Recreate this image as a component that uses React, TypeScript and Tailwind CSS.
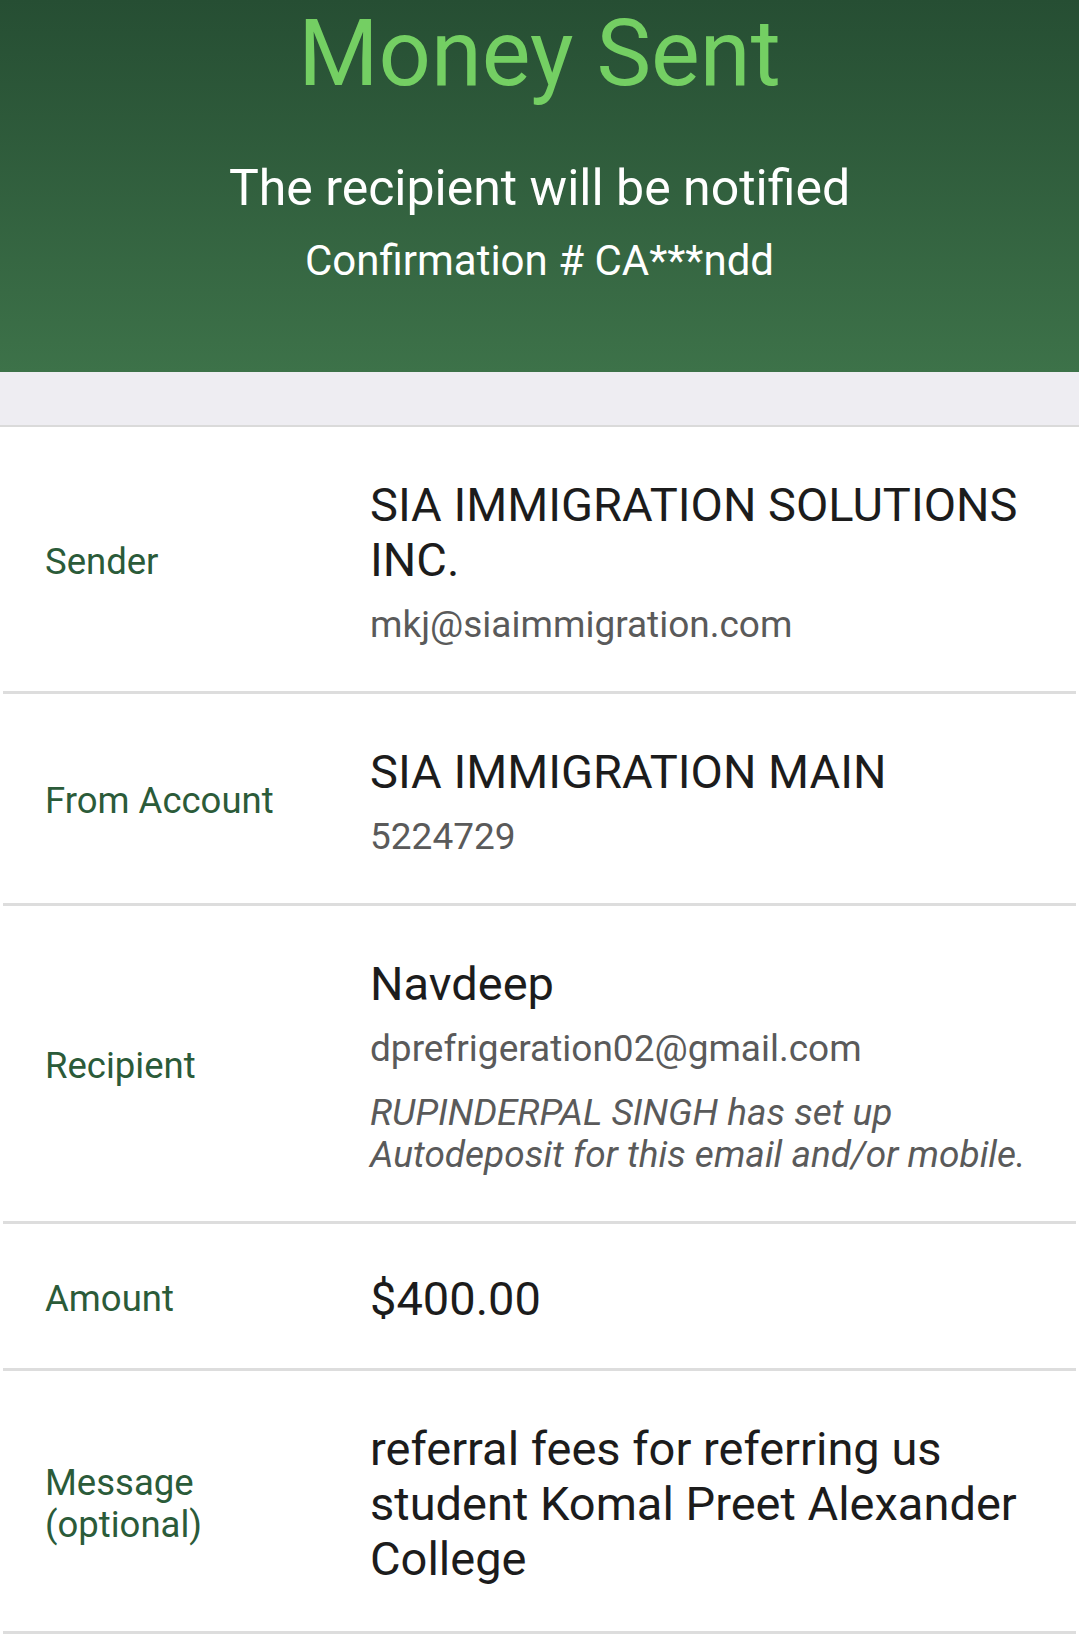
import React from "react";

const Divider = () => <div className="mx-[3px] h-[3px] bg-[#dddddd]" />;

function Row({
  label,
  children,
  pad = "pt-[50px] pb-[45px]",
}: {
  label: React.ReactNode;
  children: React.ReactNode;
  pad?: string;
}) {
  return (
    <>
      <div className={`flex items-center ${pad}`}>
        <div className="w-[370px] shrink-0 pl-[45px] text-[36.5px] leading-[42px] text-[#2b5b39]">
          {label}
        </div>
        <div className="w-[669px]">{children}</div>
      </div>
      <Divider />
    </>
  );
}

const Primary = ({ children }: { children: React.ReactNode }) => (
  <div className="text-[47px] leading-[55px] text-[#1c1c1c]">{children}</div>
);
const Secondary = ({ children }: { children: React.ReactNode }) => (
  <div className="mt-[17px] text-[37px] leading-[42px] text-[#5a5a5a]">{children}</div>
);

export default function App() {
  return (
    <div
      className="w-[1079px] min-h-[1649px] bg-white"
      style={{ fontFamily: "Roboto, 'Noto Sans', sans-serif" }}
    >
      <div className="h-[372px] bg-gradient-to-b from-[#264e33] to-[#3d7249] pt-[8px] text-center">
        <div className="text-[92px] leading-[92px] text-[#74cf63]">Money Sent</div>
        <div className="mt-[63px] text-[50px] leading-[50px] text-white">
          The recipient will be notified
        </div>
        <div className="mt-[27px] text-[42px] leading-[42px] text-white">
          Confirmation # CA***ndd
        </div>
      </div>
      <div className="h-[53px] bg-[#eeedf2]" />
      <div className="h-[2px] bg-[#dadada]" />

      <Row label="Sender">
        <Primary>SIA IMMIGRATION SOLUTIONS INC.</Primary>
        <Secondary>mkj@siaimmigration.com</Secondary>
      </Row>
      <Row label="From Account">
        <Primary>SIA IMMIGRATION MAIN</Primary>
        <Secondary>5224729</Secondary>
      </Row>
      <Row label="Recipient">
        <Primary>Navdeep</Primary>
        <Secondary>dprefrigeration02@gmail.com</Secondary>
        <div className="mt-[22px] text-[37px] leading-[42px] italic text-[#5a5a5a]">
          RUPINDERPAL SINGH has set up Autodeposit for this email and/or mobile.
        </div>
      </Row>
      <Row label="Amount" pad="pt-[47px] pb-[42px]">
        <Primary>$400.00</Primary>
      </Row>
      <Row
        label={
          <>
            Message
            <br />
            (optional)
          </>
        }
      >
        <Primary>referral fees for referring us student Komal Preet Alexander College</Primary>
      </Row>
    </div>
  );
}
